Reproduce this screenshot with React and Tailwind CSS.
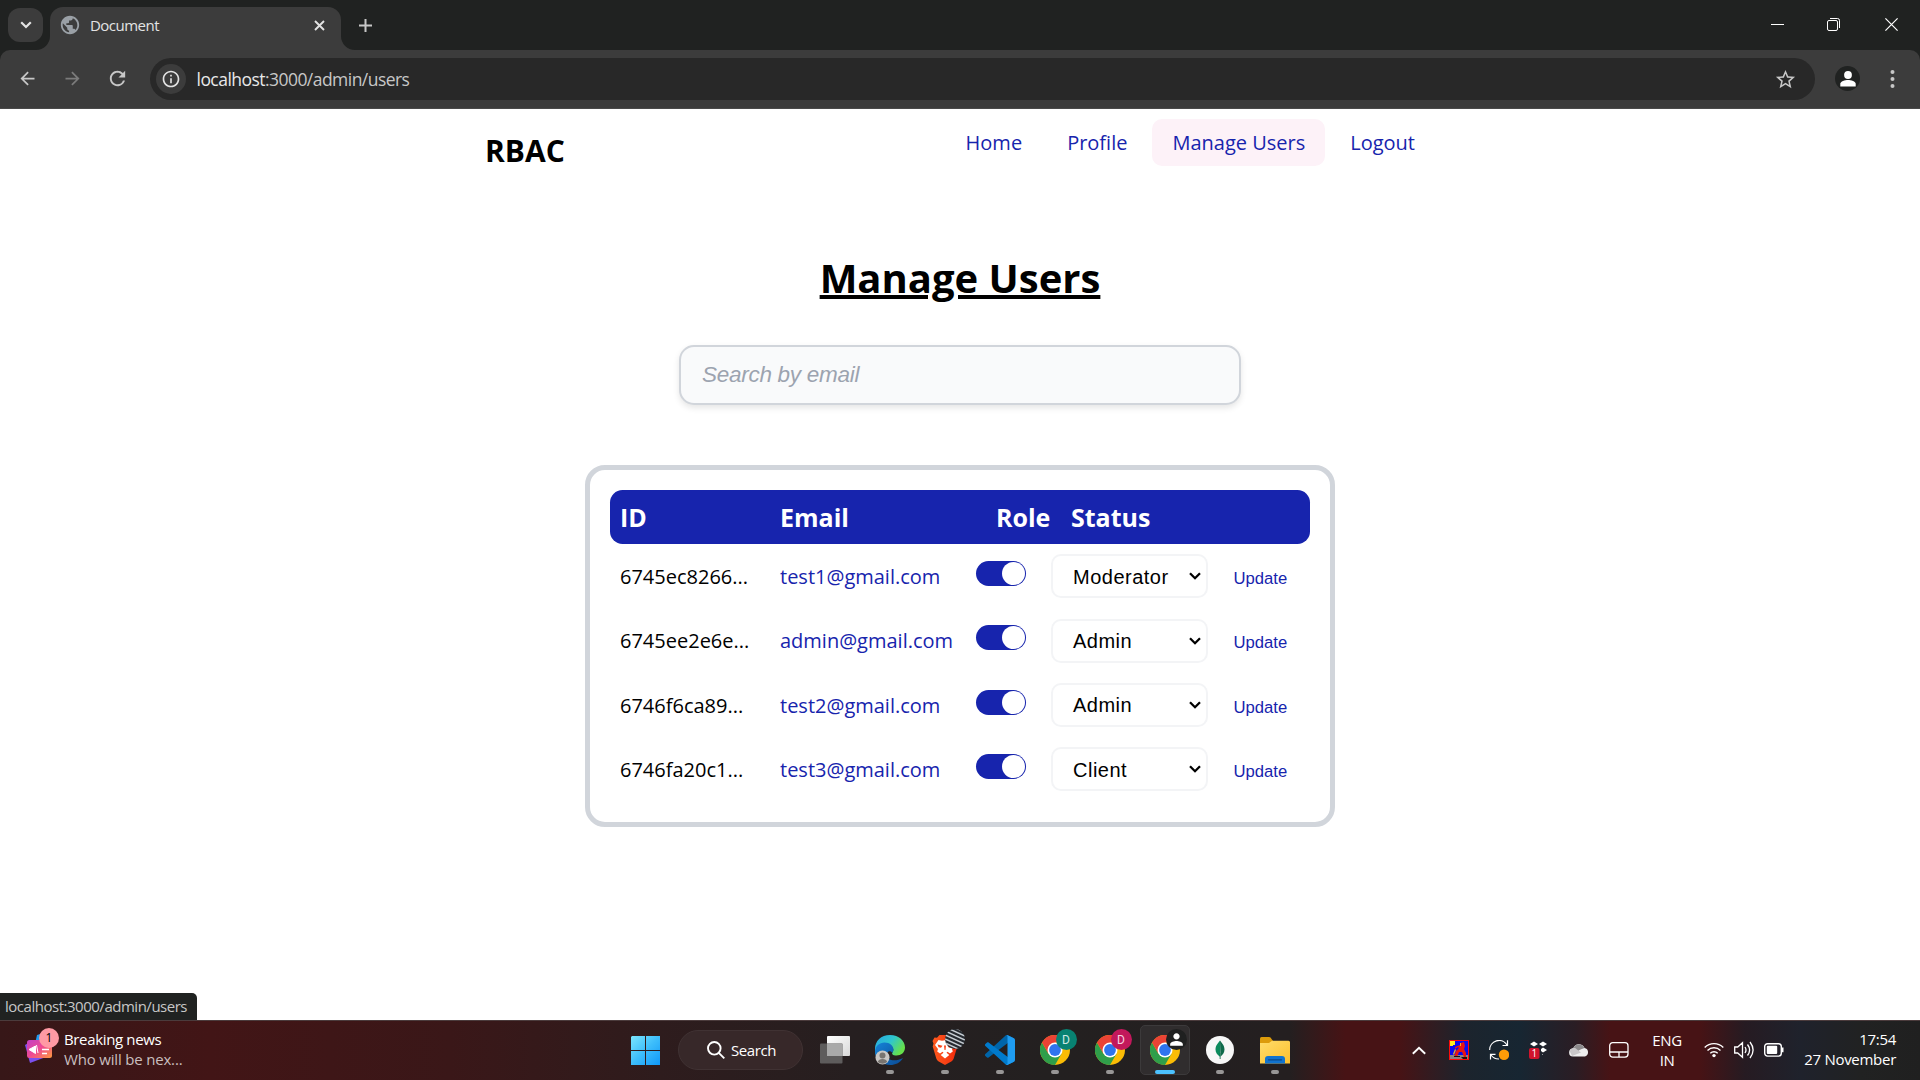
import React from "react";
import { MdArrowBack, MdArrowForward, MdRefresh, MdInfoOutline, MdStarBorder, MdPerson, MdPublic } from "react-icons/md";

const users = [
  { id: "6745ec8266...", email: "test1@gmail.com", role: "Moderator" },
  { id: "6745ee2e6e...", email: "admin@gmail.com", role: "Admin" },
  { id: "6746f6ca89...", email: "test2@gmail.com", role: "Admin" },
  { id: "6746fa20c1...", email: "test3@gmail.com", role: "Client" },
];

function TitleBar() {
  return (
    <div className="flex h-[50px] bg-[#202221] text-[#e3e3e3]">
      <div className="mt-2 ml-2 flex h-[34px] w-[35px] items-center justify-center rounded-[12px] bg-[#3c3c3c]">
        <svg width="12" height="8" viewBox="0 0 12 8" fill="none" stroke="currentColor" strokeWidth="2.2">
          <path d="M1.2 1.2 6 6l4.800-4.800" />
        </svg>
      </div>
      <div className="relative mt-[7px] ml-[7px] flex h-[43px] w-[291px] items-start rounded-t-[13px] bg-[#3c3c3c]">
        <svg className="absolute bottom-0 -left-[14px]" width="14" height="14">
          <path d="M14 0v14H0A14 14 0 0 0 14 0" fill="#3c3c3c" />
        </svg>
        <svg className="absolute -right-[14px] bottom-0" width="14" height="14">
          <path d="M0 0v14h14A14 14 0 0 1 0 0" fill="#3c3c3c" />
        </svg>
        <MdPublic className="mt-[7px] ml-[9px] text-[#9aa0a6]" size={22} />
        <span className="mt-[8px] ml-[9px] w-[200px] text-[15px] leading-5 tracking-[-0.52px]">Document</span>
        <svg className="mt-[13px] ml-[24px]" width="11" height="11" viewBox="0 0 11 11" stroke="currentColor" strokeWidth="1.900">
          <path d="m1 1 9 9m0-9-9 9" />
        </svg>
      </div>
      <svg className="mt-[19px] ml-[18px]" width="13" height="13" viewBox="0 0 13 13" stroke="#c7c7c7" strokeWidth="2">
        <path d="M6.500 0v13M0 6.500h13" />
      </svg>
      <div className="ml-auto flex pr-[22px] text-white">
        <svg className="mt-[18px]" width="13" height="13" viewBox="0 0 13 13" stroke="currentColor">
          <path d="M0 6.500h13" />
        </svg>
        <svg className="mt-[18px] ml-[43px]" width="13" height="13" viewBox="0 0 13 13" fill="none" stroke="currentColor">
          <rect x=".5" y="2.500" width="10" height="10" rx="1.500" />
          <path d="M3 .5h7.500a2 2 0 0 1 2 2V10" />
        </svg>
        <svg className="mt-[18px] ml-[45px]" width="13" height="13" viewBox="0 0 13 13" stroke="currentColor" strokeWidth="1.200">
          <path d="m.4.400 12.200 12.200m0-12.200L.4 12.600" />
        </svg>
      </div>
    </div>
  );
}

function Toolbar() {
  return (
    <div className="bg-[#202221]">
      <div className="flex h-[59px] items-start rounded-t-[10px] border-b border-[#4a4a4a] bg-[#3c3c3c] text-[#c7c7c7]">
        <MdArrowBack className="mt-[18px] ml-[17px]" size={21} />
        <MdArrowForward className="mt-[18px] ml-[24px] text-[#7b7b7b]" size={21} />
        <MdRefresh className="mt-[17px] ml-[23px]" size={23} />
        <div className="mt-2 ml-[21px] flex h-[42px] w-[1665px] items-center rounded-full bg-[#282828]">
          <div className="ml-[6px] flex h-[30px] w-[30px] items-center justify-center rounded-full bg-[#3c3c3c] text-[#e3e3e3]">
            <MdInfoOutline size={20} />
          </div>
          <span className="ml-[10.500px] text-[17.5px] leading-6 tracking-[-0.54px] whitespace-nowrap text-[#c7c7c7]">
            <span className="text-[#e8e8e8]">localhost</span>:3000/admin/users
          </span>
          <MdStarBorder className="mr-[18px] ml-auto" size={23} />
        </div>
        <div className="mt-4 ml-5 flex h-[25px] w-[25px] items-center justify-center rounded-full bg-[#202221] text-white">
          <svg width="16" height="16" viewBox="0 0 16 16" fill="currentColor">
            <circle cx="8" cy="4" r="3.900" />
            <path d="M.3 15.500v-2.700C.3 10.300 5 9 8 9s7.700 1.300 7.700 3.800v2.700z" />
          </svg>
        </div>
        <svg className="mt-5 ml-[30px]" width="5" height="18" viewBox="0 0 5 18" fill="currentColor">
          <circle cx="2.500" cy="2" r="2" />
          <circle cx="2.500" cy="9" r="2" />
          <circle cx="2.500" cy="16" r="2" />
        </svg>
      </div>
    </div>
  );
}

const navLink = "rounded-[10px] px-5 py-[10px] leading-[27px]";

function Page() {
  return (
    <div className="flex h-[911px] flex-col items-center bg-white font-['Open_Sans',sans-serif] text-[20px] text-black">
      <header className="flex h-[61px] w-[960px] items-start justify-between px-[5px] pt-[10px]">
        <h1 className="mt-[11px] text-[30px] leading-[41px] font-bold">RBAC</h1>
        <nav className="flex gap-[5px] text-[#1724ad]">
          <a className={navLink}>Home</a>
          <a className={navLink}>Profile</a>
          <a className="rounded-[10px] bg-[#fdf2f8] px-5 py-[10px] leading-[27px]">Manage Users</a>
          <a className={navLink}>Logout</a>
        </nav>
      </header>
      <h2 className="mt-[81px] text-[40px] leading-[54px] font-bold underline decoration-[4px]">Manage Users</h2>
      <input
        className="mt-[40px] h-[60px] w-[562px] rounded-[15px] border-2 border-[#d1d5db] bg-[#f9fafb] pr-5 pl-[21px] font-['Liberation_Sans',sans-serif] text-[22.5px] tracking-[-0.28px] italic shadow-[0_3px_6px_rgba(0,0,0,0.1)] placeholder:text-[#9ca3af]"
        placeholder="Search by email"
      />
      <section className="mt-[60px] h-[362px] w-[750px] rounded-[20px] border-[5px] border-[#d1d5db] p-5">
        <div className="grid h-[54px] grid-cols-[160px_216px_75px_1fr] items-center rounded-[12.5px] bg-[#1724ad] pt-[2px] text-[25px] font-bold text-white">
          <span className="pl-[10px]">ID</span>
          <span className="pl-[10px]">Email</span>
          <span className="pl-[10px]">Role</span>
          <span className="pl-[10px]">Status</span>
        </div>
        {users.map((u) => (
          <UserRow key={u.id} user={u} />
        ))}
      </section>
    </div>
  );
}

function UserRow({ user }) {
  return (
    <div className="grid h-[64.4px] grid-cols-[160px_206px_75px_172px_1fr] items-start pt-[10px] leading-[27px]">
      <span className="mt-[9px] pl-[10px]">{user.id}</span>
      <span className="mt-[9px] pl-[10px] text-[#1724ad]">{user.email}</span>
      <span className="mt-[7px] flex h-[25px] w-[50px] items-center justify-end rounded-full bg-[#1724ad] pr-[1.500px]">
        <span className="h-[23px] w-[23px] rounded-full bg-white" />
      </span>
      <span className="mt-[0.3px] flex h-[44px] w-[157px] items-center justify-between rounded-[10px] border-2 border-[#f3f4f6] pr-[5px] pl-5 font-['Liberation_Sans',sans-serif] tracking-[0.500px]">
        <span className="pt-[1.500px]">{user.role}</span>
        <svg width="12" height="8" viewBox="0 0 12 8" fill="none" stroke="currentColor" strokeWidth="2.300">
          <path d="m1 1.200 5 5 5-5" />
        </svg>
      </span>
      <span className="mt-[11px] pl-[10.500px] font-['Liberation_Sans',sans-serif] text-[16.67px] text-[#1724ad]">Update</span>
    </div>
  );
}

function ChromeIcon() {
  return (
    <svg width="30" height="30" viewBox="0 0 30 30">
      <circle cx="15" cy="15" r="15" fill="#fbbc05" />
      <path d="M2 7.500A15 15 0 0 0 15 30l6.500-11.250L15 15 8.500 18.750z" fill="#2f9e4a" />
      <path d="M2 7.500A15 15 0 0 1 28 7.500H15L8.500 18.750z" fill="#ea4335" />
      <circle cx="15" cy="15" r="7.500" fill="#fff" />
      <circle cx="15" cy="15" r="5.900" fill="#2f74ee" />
    </svg>
  );
}

function EdgeIcon() {
  return (
    <svg width="30" height="30" viewBox="0 0 30 30">
      <defs>
        <linearGradient id="edgeTop" x1="0" y1="0" x2="1" y2=".5">
          <stop offset="0" stopColor="#26a7e4" />
          <stop offset=".55" stopColor="#2fc6cd" />
          <stop offset="1" stopColor="#66e04c" />
        </linearGradient>
        <linearGradient id="edgeLow" x1="0" y1="0" x2="1" y2="1">
          <stop offset="0" stopColor="#1583d8" />
          <stop offset="1" stopColor="#0b4a94" />
        </linearGradient>
      </defs>
      <path d="M0 14C0 6 6 0 15 0c9 0 15 6 15 12.500 0 5-4 8-8.500 8-4 0-5-1.500-4-3 2-3 .5-6.500-4-6.500C7 11 2 14 0 20z" fill="url(#edgeTop)" />
      <path d="M0 17c0-6 4.500-9.500 9.500-9.500 5.500 0 9 3.500 9 7 0 1.500-1 2.500-1 3.500-2-3-6-2-6 2 0 5 8 7.500 16.500 3-3 5-8 7-12.500 7C7 30 0 24 0 17" fill="url(#edgeLow)" />
      <circle cx="7.500" cy="22.500" r="7" fill="#c9c7c5" />
      <circle cx="7.500" cy="20.500" r="3" fill="#787470" />
      <path d="M2.800 27c.5-4 9-4 9.400 0a7 7 0 0 1-9.400 0" fill="#787470" />
    </svg>
  );
}

function BraveIcon() {
  return (
    <span className="relative flex h-[30px] w-[30px]">
      <svg width="30" height="30" viewBox="0 0 30 30">
        <defs>
          <linearGradient id="brave" x1="0" y1="0" x2="1" y2="0">
            <stop offset="0" stopColor="#ff5a1e" />
            <stop offset="1" stopColor="#f02a0c" />
          </linearGradient>
        </defs>
        <path d="M9.500 0h11l2.500 2.800 2.500-.3 2 3.500-1 2.500.8 3-3.600 12q-.5 1.700-2 2.800L15 30l-6.700-3.700q-1.500-1.100-2-2.800l-3.600-12 .8-3-1-2.500 2-3.500 2.500.3z" fill="url(#brave)" />
        <path d="m8.500 5 3.500.8 3-.6 3 .6 3.500-.8 3.500 5-3 4 .8 2.500-2.800 2-2.500-1.800-1 1 2.800 2.300L15 23.500 10.700 20l2.800-2.300-1-1L10 18.500l-2.800-2 .8-2.500-3-4z" fill="#fff" />
        <path d="m7.500 9.500 5 1.200-1.500 2-2.500-.5zM22.500 9.500l-5 1.200 1.500 2 2.500-.5zM14 10.500h2l-.5 4.500h-1z" fill="#fa4318" />
      </svg>
      <svg className="absolute -top-[6px] left-[15px]" width="20" height="20" viewBox="0 0 20 20">
        <defs>
          <clipPath id="stripeBadge"><circle cx="10" cy="10" r="10" /></clipPath>
        </defs>
        <g clipPath="url(#stripeBadge)">
          <rect width="20" height="20" fill="#262a30" />
          <path d="m0-2 20 9M0 2l20 9M0 6l20 9M0 10l20 9M0 14l20 9M6-3l16 7" stroke="#c6ccd2" strokeWidth="1.500" />
        </g>
      </svg>
    </span>
  );
}

function VsCodeIcon() {
  return (
    <svg width="30" height="30" viewBox="0 0 100 100">
      <path fill="#0065A9" d="M96.460 10.800 75.860.88C73.470-.27 70.620.21 68.750 2.080L1.300 63.580c-1.810 1.660-1.810 4.510 0 6.170l5.510 5c1.490 1.350 3.720 1.450 5.320.24L93.360 13.370C96.090 11.300 100 13.250 100 16.670v-.24c0-2.400-1.380-4.590-3.540-5.630z" />
      <path fill="#007ACC" d="M96.460 89.200 75.860 99.120c-2.390 1.150-5.240.67-7.110-1.200L1.300 36.420c-1.810-1.660-1.810-4.520 0-6.170l5.510-5c1.490-1.350 3.720-1.450 5.320-.24l81.230 61.620c2.730 2.070 6.640.12 6.640-3.300v.24c0 2.400-1.380 4.590-3.540 5.630z" />
      <path fill="#1F9CF0" d="M75.860 99.130c-2.390 1.140-5.240.66-7.110-1.210 2.310 2.300 6.250.67 6.250-2.590V4.670c0-3.260-3.940-4.890-6.250-2.590C70.620.21 73.470-.27 75.860.87l20.600 9.910c2.160 1.040 3.540 3.230 3.540 5.630v67.180c0 2.400-1.380 4.590-3.540 5.630z" />
    </svg>
  );
}

function MongoIcon() {
  return (
    <svg width="28" height="28" viewBox="0 0 28 28">
      <circle cx="14" cy="14" r="14" fill="#f7f7f7" />
      <path d="M14 4.500c1.500 2.200 4.500 4.500 4.500 9 0 3.500-2 5.500-4.100 7.200z" fill="#0f6a4b" />
      <path d="M14 4.500c-1.500 2.200-4.500 4.500-4.500 9 0 3.500 2 5.500 4.500 7.200z" fill="#0a8a5c" />
      <path d="M13.700 17h.7l.2 6h-.9z" fill="#0f6a4b" />
    </svg>
  );
}

function FolderIcon() {
  return (
    <svg width="30" height="27" viewBox="0 0 30 27">
      <defs>
        <linearGradient id="folder" x1="0" y1="0" x2="1" y2="1">
          <stop offset="0" stopColor="#ffdc6a" />
          <stop offset="1" stopColor="#fcc02f" />
        </linearGradient>
      </defs>
      <path d="M0 1.500Q0 0 1.500 0H9q1 0 1.700.8L13 4v6H0z" fill="#dc9b0b" />
      <path d="M0 6h9l3-2.200h16.500q1.500 0 1.500 1.500V26.500H0z" fill="url(#folder)" />
      <path d="M5 26.500V22q0-3 3-3h14q3 0 3 3v4.500z" fill="#1173cf" />
      <path d="M8.500 22.800h13" stroke="#0a4a8c" strokeWidth="1.200" strokeLinecap="round" />
    </svg>
  );
}

function Slot({ children, badge, active, idle = true }) {
  return (
    <div className="flex h-[59px] w-[55px] justify-center pt-1">
      <div className={active ? "relative flex h-[50px] w-[50px] flex-col items-center rounded-[5px] border border-[#3c3a3b] bg-[#302d2e]" : "relative flex h-[50px] w-[50px] flex-col items-center border border-transparent"}>
        <div className="mt-[9px] flex h-[30px] items-center">{children}</div>
        {badge}
        {idle && <span className={active ? "mt-[5px] h-1 w-5 rounded-full bg-[#4cc2ff]" : "mt-[5px] h-1 w-2 rounded-full bg-[#989696]"} />}
      </div>
    </div>
  );
}

const letterBadge = "absolute top-[3px] left-[25px] flex h-[21px] w-[21px] items-center justify-center rounded-full";

function Apps() {
  return (
    <div className="ml-[445px] flex">
      <svg className="mt-[15px]" width="30" height="30" viewBox="0 0 30 30">
        <defs>
          <linearGradient id="win" x1="0" y1="0" x2="1" y2="1">
            <stop offset="0" stopColor="#7be6fd" />
            <stop offset=".5" stopColor="#3dbdfb" />
            <stop offset="1" stopColor="#0f98f8" />
          </linearGradient>
        </defs>
        <path d="M1 0h13v14H0V1zm14 0h14v14H15zM0 15h14v14H0zm15 0h14v14H15z" fill="url(#win)" />
      </svg>
      <div className="mt-[9px] ml-[17px] flex h-10 w-[125px] items-center rounded-full border border-[#403233] bg-[#372829] text-white">
        <svg className="ml-7" width="18" height="18" viewBox="0 0 18 18" fill="none" stroke="currentColor" strokeWidth="1.900">
          <circle cx="7.300" cy="7.300" r="6.300" />
          <path d="m11.800 11.800 5.500 5.500" />
        </svg>
        <span className="ml-[6px] text-[15px] tracking-[-0.4px]">Search</span>
      </div>
      <div className="ml-[4px] flex">
        <Slot idle={false}>
          <svg width="30" height="28" viewBox="0 0 30 28">
            <defs>
              <linearGradient id="tv" x1="0" y1="0" x2="1" y2="1">
                <stop offset="0" stopColor="#fff" />
                <stop offset="1" stopColor="#d8d8d8" />
              </linearGradient>
            </defs>
            <rect x="7" y="0" width="23" height="20" rx="1" fill="url(#tv)" />
            <rect x="0" y="7.500" width="22.500" height="20" rx="1" fill="#5e5c5c" />
            <path d="M7 7.500h15.500V20H7z" fill="#a9a9a9" />
          </svg>
        </Slot>
        <Slot><EdgeIcon /></Slot>
        <Slot><BraveIcon /></Slot>
        <Slot><VsCodeIcon /></Slot>
        <Slot badge={<span className="absolute top-[3px] left-[25px] flex h-[21px] w-[21px] items-center justify-center rounded-full bg-[#088272] font-[Roboto,sans-serif] text-[12px] text-[#cfe8e4]">D</span>}>
          <ChromeIcon />
        </Slot>
        <Slot badge={<span className="absolute top-[3px] left-[25px] flex h-[21px] w-[21px] items-center justify-center rounded-full bg-[#c2185b] font-[Roboto,sans-serif] text-[12px] text-[#f5d3e0]">D</span>}>
          <ChromeIcon />
        </Slot>
        <Slot
          active
          badge={
            <span className={letterBadge + " bg-[#1f2020]"}>
              <MdPerson className="text-white" size={19} />
            </span>
          }
        >
          <ChromeIcon />
        </Slot>
        <Slot><MongoIcon /></Slot>
        <Slot><FolderIcon /></Slot>
      </div>
    </div>
  );
}

function Tray() {
  return (
    <div className="ml-[110px] flex h-[58px] items-center text-white">
      <svg width="14" height="9" viewBox="0 0 14 9" fill="none" stroke="currentColor" strokeWidth="1.900">
        <path d="m.8 7.800 6.200-6 6.200 6" />
      </svg>
      <svg className="ml-[23px]" width="20" height="20" viewBox="0 0 20 20">
        <path d="M0 0h20v20H0z" fill="#ff0a0a" />
        <path d="M1 1h18v18H1z" fill="#0a0af0" />
        <path d="M1 15h18v4H1z" fill="#8c8080" />
        <path d="M1 1h5v4H4v1H1z" fill="#ffee20" />
        <path d="m12 3 3-1 1 4-1 3 2 4 0 4h-2l-2-5-3 0-2 5H5l2-6 3-3-1-1-3 2V7l5-2z" fill="#e81414" />
        <path d="m6 9 1 1-2 5-1-1zM11 3h1v3h-1z" fill="#f0b020" />
        <path d="M5 16h6v1H5zM12 17h6v2h-4z" fill="#201010" />
      </svg>
      <svg className="ml-[20px]" width="20" height="20" viewBox="0 0 20 20" fill="none" stroke="currentColor" strokeWidth="1.200">
        <path d="M.7 10A9.300 9.300 0 0 1 18 5M18.500.3V5.500H13.500M1.500 19.500v-5.200h5M2 15a9.300 9.300 0 0 0 8 4" />
        <circle cx="15" cy="14.800" r="5.200" fill="#ff9c08" stroke="none" />
      </svg>
      <svg className="ml-[20px]" width="20" height="20" viewBox="0 0 20 20" fill="currentColor">
        <path d="m5 1.500 4 2.500-4 2.500L1 4zM14 1.500 18 4l-4 2.500L10 4zM14 7.500l4 2.500-4 2.500-2-1.500V9zM13 14.500l1-.5v1z" />
        <rect x="0" y="8" width="10.500" height="11" rx="2" fill="#d1132c" />
        <text x="2.500" y="17" fontSize="10" fontFamily="Open Sans, sans-serif" fill="#fff">1</text>
      </svg>
      <svg className="ml-[20px]" width="20" height="14" viewBox="0 0 20 14">
        <path d="M4 13.500a4 4 0 0 1 .2-8A6 6 0 0 1 15.500 5a4.400 4.400 0 0 1 .5 8.500z" fill="#eee" />
        <path d="M4.300 5.500A6 6 0 0 1 15.500 5l-4 1.500L9 8z" fill="#8c8a8c" />
        <path d="M.8 8.500A4 4 0 0 1 8 6.500l4 3-9 3.500z" fill="#c9c7c9" />
      </svg>
      <svg className="ml-[20px]" width="20" height="16" viewBox="0 0 20 16" fill="none" stroke="currentColor" strokeWidth="1.300">
        <rect x=".7" y=".7" width="18.300" height="14.400" rx="3" />
        <path d="M.7 10H19M10 10v5" />
      </svg>
      <div className="ml-[18px] w-[40px] text-center text-[15px] leading-5 tracking-[-0.4px]">
        <div>ENG</div>
        <div>IN</div>
      </div>
      <svg className="ml-[17px]" width="20" height="16" viewBox="0 0 20 16" fill="none" stroke="currentColor" strokeWidth="1.400">
        <path d="M.7 5.500a13.200 13.200 0 0 1 18.600 0M3.500 8.500a9.200 9.200 0 0 1 13 0M6.300 11.300a5.300 5.300 0 0 1 7.400 0" />
        <circle cx="10" cy="13.600" r="1.700" fill="currentColor" stroke="none" />
      </svg>
      <svg className="ml-[10px]" width="20" height="18" viewBox="0 0 20 18" fill="none" stroke="currentColor" strokeWidth="1.300">
        <path d="M.7 6h3L8.500 1.800v14.400L3.700 12h-3zM11 6q2 3 0 6M13.500 3.500q4.200 5.500 0 11M16 1q6.200 8 0 16" />
      </svg>
      <svg className="ml-[10px]" width="21" height="14" viewBox="0 0 21 14" fill="none" stroke="currentColor" strokeWidth="1.400">
        <rect x=".7" y=".7" width="16.600" height="12.400" rx="2.800" />
        <rect x="2.800" y="2.800" width="10.400" height="8.200" rx="1" fill="currentColor" stroke="none" />
        <path d="M18 4.500h1.500v4.800H18z" fill="currentColor" stroke="none" />
      </svg>
      <div className="ml-[12px] w-[99px] pb-[2px] text-right text-[15px] leading-5 tracking-[-0.28px] whitespace-nowrap">
        <div>17:54</div>
        <div>27 November</div>
      </div>
    </div>
  );
}

function Taskbar() {
  return (
    <div className="flex h-[60px] items-start border-t border-[#4b3b3c] bg-[linear-gradient(90deg,#371718_0px,#421516_210px,#3a1718_450px,#2e1c1d_660px,#261f20_850px,#232020_1050px,#241f20_1290px,#471315_1345px,#471315_1400px,#1c242d_1465px,#172632_1520px,#2a1d24_1575px,#471315_1610px,#471315_1700px,#261b22_1745px,#1f222c_1800px,#212222_1860px,#202020_1920px)]">
      <div className="flex w-[186px] pt-[8px] pl-[25px]">
        <div className="relative h-[34px] w-[35px]">
          <svg width="34" height="36" viewBox="0 0 34 36">
            <defs>
              <linearGradient id="news" x1="0" y1="0" x2="1" y2="1">
                <stop offset="0" stopColor="#c13fc6" />
                <stop offset=".5" stopColor="#ef4a92" />
                <stop offset="1" stopColor="#ff9a3c" />
              </linearGradient>
            </defs>
            <path d="m12 6 10-3v12H10z" fill="#1e9bf0" />
            <path d="m0 16 8-5 13 17-16 6z" fill="#7b50ee" />
            <rect x="2" y="11" width="25" height="18" rx="2.500" fill="url(#news)" />
            <path d="m4 20.500 6.500-3.500v7.500zM11.500 16l1.500 8" stroke="#fff" fill="#fff" strokeWidth="1" />
            <path d="M17 20.500h7M17 24.500h5" stroke="#fff" strokeWidth="1.700" />
          </svg>
          <span className="absolute -top-[1px] left-[14px] flex h-5 w-5 items-center justify-center rounded-full bg-[#ff99a4] text-[12px] text-black">1</span>
        </div>
        <div className="ml-[4px] text-[15px] leading-5 whitespace-nowrap text-white">
          <div className="tracking-[-0.35px]">Breaking news</div>
          <div className="tracking-[-0.18px] text-[#c9bfbf]">Who will be nex...</div>
        </div>
      </div>
      <Apps />
      <Tray />
    </div>
  );
}

export default function App() {
  return (
    <div className="relative flex h-[1080px] w-[1920px] flex-col overflow-hidden font-['Open_Sans',sans-serif]">
      <TitleBar />
      <Toolbar />
      <Page />
      <div className="absolute bottom-[60px] left-0 flex h-[27px] w-[197px] items-center rounded-tr-[5px] bg-[#202221] pl-[5px] text-[15px] tracking-[-0.48px] text-[#c7c7c7]">
        localhost:3000/admin/users
      </div>
      <Taskbar />
    </div>
  );
}
